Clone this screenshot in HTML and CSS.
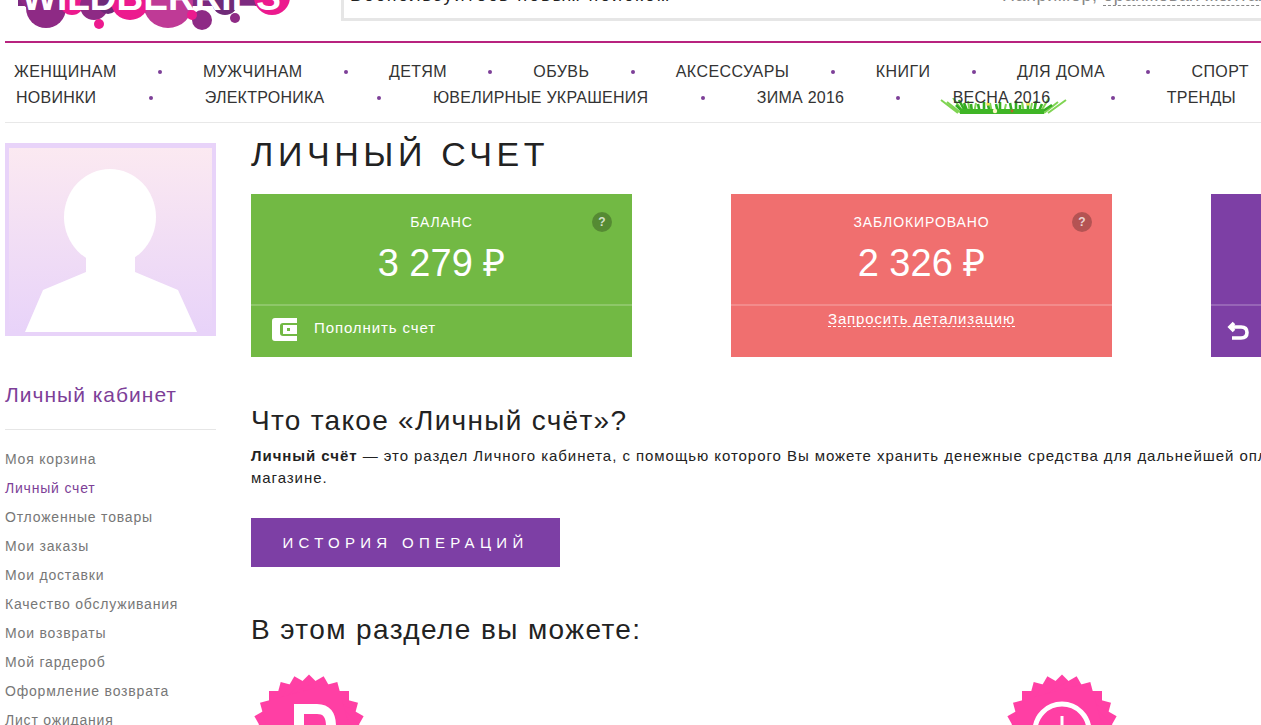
FILE: index.html
```html
<!DOCTYPE html>
<html lang="ru">
<head>
    <meta charset="UTF-8">
    <meta name="viewport" content="width=device-width, initial-scale=1.0">
    <title>Личный счет</title>
    <link rel="stylesheet" href="styles.css">
</head>
<body>
    <header class="top">
        <svg class="logo" width="300" height="34" viewBox="0 0 300 34">
            <rect x="18" y="-5" width="260" height="11" fill="#7d2a80"/>
            <circle cx="35" cy="-6" r="16" fill="#8e2a85"/>
            <circle cx="46" cy="8" r="20" fill="#8e2a85"/>
            <circle cx="72" cy="3" r="12" fill="#ec1a8e"/>
            <circle cx="94" cy="6" r="14" fill="#8e2a85"/>
            <circle cx="108" cy="4" r="10" fill="#6f2a78"/>
            <circle cx="99" cy="24" r="5" fill="#ec1a8e"/>
            <circle cx="168" cy="3" r="25" fill="#bf3a96"/>
            <circle cx="130" cy="1" r="19" fill="#ec1a8e"/>
            <circle cx="202" cy="20" r="10" fill="#8e2a85"/>
            <circle cx="192" cy="15" r="5" fill="#ec1a8e"/>
            <circle cx="225" cy="2" r="13" fill="#6f2a78"/>
            <circle cx="235" cy="18" r="5" fill="#8e2a85"/>
            <circle cx="272" cy="-3" r="18" fill="#ec1a8e"/>
            <text class="logo-text" x="22" y="10">WILDBERRIES</text>
        </svg>
        <div class="search">
            <span class="search-text">Воспользуйтесь новым поиском</span>
            <span class="search-hint">Например, <span class="dashed">оранжевая желтая</span></span>
        </div>
    </header>

    <nav class="menu">
        <div class="menu-row">
            <a>ЖЕНЩИНАМ</a><i></i><a>МУЖЧИНАМ</a><i></i><a>ДЕТЯМ</a><i></i><a>ОБУВЬ</a><i></i><a>АКСЕССУАРЫ</a><i></i><a>КНИГИ</a><i></i><a>ДЛЯ ДОМА</a><i></i><a>СПОРТ</a>
        </div>
        <div class="menu-row second">
            <a>НОВИНКИ</a><i></i><a>ЭЛЕКТРОНИКА</a><i></i><a>ЮВЕЛИРНЫЕ УКРАШЕНИЯ</a><i></i><a>ЗИМА 2016</a><i></i>
            <a class="spring">
                <svg class="grass" width="127" height="16" viewBox="0 0 127 16">
                    <path class="blades-light" d="M1 2 L18 15 M7 4 L21 15 M13 0 L24 15 M109 0 L100 15 M118 4 L104 15 M126 2 L108 15 M28 3 L30 15 M36 5 L34 15 M50 5 L52 15 M66 6 L64 15 M82 4 L84 15 M92 5 L90 15"/>
                    <path class="blades" d="M19 2 L26 15 M24 5 L28 15 M31 6 L32 15 M38 6 L40 15 M44 4 L44 15 M48 7 L50 15 M56 6 L58 15 M60 4 L60 15 M70 5 L72 15 M76 3 L76 15 M80 7 L80 15 M88 4 L88 15 M96 3 L94 15 M102 6 L98 15 M16 7 L24 15 M112 7 L100 15"/>
                    <rect x="20" y="11" width="84" height="5" fill="#3fb526"/>
                    <circle cx="48" cy="6" r="1.8" fill="#f2e24e"/>
                    <circle cx="88" cy="6" r="1.8" fill="#f2e24e"/>
                    <circle cx="55" cy="13" r="2.2" fill="#fff7c8"/>
                    <circle cx="72" cy="13" r="1.4" fill="#b5622a"/>
                </svg>
                <span class="spring-text">ВЕСНА 2016</span>
            </a><i></i><a>ТРЕНДЫ</a>
        </div>
    </nav>

    <div class="page">
        <aside class="side">
            <svg class="avatar" width="211" height="193" viewBox="0 0 211 193">
                <defs>
                    <linearGradient id="avatarBg" x1="0" y1="0" x2="0" y2="1">
                        <stop offset="0" stop-color="#fbe9f1"/>
                        <stop offset="1" stop-color="#e8d3f9"/>
                    </linearGradient>
                </defs>
                <rect width="211" height="193" fill="#e8d3f9"/>
                <rect x="4" y="5" width="203" height="184" fill="url(#avatarBg)"/>
                <ellipse cx="105" cy="74" rx="46" ry="48" fill="#fff"/>
                <path d="M81 105 H130 V129 L173 147 L192 189 H20 L38 147 L81 129 Z" fill="#fff"/>
            </svg>
            <h3 class="side-title">Личный кабинет</h3>
            <ul class="side-menu">
                <li>Моя корзина</li>
                <li class="active">Личный счет</li>
                <li>Отложенные товары</li>
                <li>Мои заказы</li>
                <li>Мои доставки</li>
                <li>Качество обслуживания</li>
                <li>Мои возвраты</li>
                <li>Мой гардероб</li>
                <li>Оформление возврата</li>
                <li>Лист ожидания</li>
            </ul>
        </aside>

        <main class="content">
            <h1>ЛИЧНЫЙ СЧЕТ</h1>
            <div class="cards">
                <section class="card green">
                    <div class="card-top">
                        <span class="help">?</span>
                        <div class="card-label">БАЛАНС</div>
                        <div class="card-sum">3 279 ₽</div>
                    </div>
                    <div class="card-bottom">
                        <svg width="25" height="23" viewBox="0 0 25 23">
                            <path d="M3 0 H25 V5 H11 Q8 5 8 8 V15 Q8 18 11 18 H25 V23 H3 Q0 23 0 20 V3 Q0 0 3 0 Z" fill="#fff"/>
                            <path d="M11 7 H25 V16 H11 Z" fill="#fff"/>
                            <rect x="15" y="10" width="3" height="3" fill="#72b944"/>
                        </svg>
                        <span class="card-action">Пополнить счет</span>
                    </div>
                </section>
                <section class="card red">
                    <div class="card-top">
                        <span class="help">?</span>
                        <div class="card-label">ЗАБЛОКИРОВАНО</div>
                        <div class="card-sum">2 326 ₽</div>
                    </div>
                    <div class="card-bottom center">
                        <span class="card-link">Запросить детализацию</span>
                    </div>
                </section>
                <section class="card purple">
                    <div class="card-top"></div>
                    <div class="card-bottom">
                        <svg width="23" height="20" viewBox="0 0 23 20">
                            <path d="M7 2 L3 6 L7 10 M3 6 H14 Q20 6 20 11.5 Q20 17 14 17 H5" fill="none" stroke="#fff" stroke-width="3.6"/>
                        </svg>
                    </div>
                </section>
            </div>

            <h2 class="what">Что такое «Личный счёт»?</h2>
            <p class="about"><b>Личный счёт</b> — это раздел Личного кабинета, с помощью которого Вы можете хранить денежные средства для дальнейшей оплаты покупок в нашем магазине.</p>
            <a class="history">ИСТОРИЯ ОПЕРАЦИЙ</a>

            <h2 class="can">В этом разделе вы можете:</h2>
            <div class="features">
                <svg class="badge" width="114" height="114" viewBox="-57 -57 114 114">
                    <g fill="#ff3fa4">
                        <rect x="-40" y="-40" width="80" height="80"/>
                        <rect x="-40" y="-40" width="80" height="80" transform="rotate(15)"/>
                        <rect x="-40" y="-40" width="80" height="80" transform="rotate(30)"/>
                        <rect x="-40" y="-40" width="80" height="80" transform="rotate(45)"/>
                        <rect x="-40" y="-40" width="80" height="80" transform="rotate(60)"/>
                        <rect x="-40" y="-40" width="80" height="80" transform="rotate(75)"/>
                    </g>
                    <path d="M-10 30 V-22 H8 Q22 -22 22 -5 Q22 12 8 12 H-10" fill="none" stroke="#fff" stroke-width="10"/>
                </svg>
                <svg class="badge" width="114" height="114" viewBox="-57 -57 114 114">
                    <g fill="#ff3fa4">
                        <rect x="-40" y="-40" width="80" height="80"/>
                        <rect x="-40" y="-40" width="80" height="80" transform="rotate(15)"/>
                        <rect x="-40" y="-40" width="80" height="80" transform="rotate(30)"/>
                        <rect x="-40" y="-40" width="80" height="80" transform="rotate(45)"/>
                        <rect x="-40" y="-40" width="80" height="80" transform="rotate(60)"/>
                        <rect x="-40" y="-40" width="80" height="80" transform="rotate(75)"/>
                    </g>
                    <circle r="27" fill="none" stroke="#fff" stroke-width="5"/>
                    <path d="M0 -15 V15 M-15 0 H15" stroke="#fff" stroke-width="3"/>
                </svg>
            </div>
        </main>
    </div>
</body>
</html>
```

FILE: styles.css
```css
/* General */
html, body {
    height: 725px;
    overflow: hidden;
}

body {
    font-family: 'Liberation Sans', Arial, sans-serif;
    background-color: #fff;
    color: #222;
    margin: 0;
}

h1, h2, h3, p, ul {
    margin: 0;
    padding: 0;
    font-weight: normal;
}

/* Header */
.top {
    display: flex;
    height: 41px;
    margin-left: 5px;
    border-bottom: 2px solid #b8237f;
    overflow: hidden;
}

.logo {
    flex: none;
    display: block;
    margin-left: -5px;
    overflow: hidden;
}

.logo-text {
    font-family: 'Liberation Sans', Arial, sans-serif;
    font-size: 37px;
    font-weight: bold;
    fill: #fff;
}

.search {
    flex: none;
    box-sizing: border-box;
    display: flex;
    align-items: flex-end;
    width: 960px;
    height: 21px;
    margin-left: 41px;
    padding: 0 0 14px 6px;
    border: 3px solid #e6e6e6;
    border-top: none;
    font-size: 18px;
    line-height: 18px;
    white-space: nowrap;
}

.search-text {
    flex: none;
    width: 652px;
    letter-spacing: 1.9px;
}

.search-hint {
    flex: none;
    color: #888;
    letter-spacing: 0.6px;
}

.dashed {
    border-bottom: 1px dashed #888;
}

/* Menu */
.menu {
    margin-left: 5px;
    padding: 16px 0 11px;
    border-bottom: 1px solid #e8e8e8;
    font-size: 16px;
    line-height: 26px;
    letter-spacing: 0.45px;
    color: #333;
}

.menu-row {
    display: flex;
    justify-content: space-between;
    align-items: center;
    padding: 0 12px 0 9px;
}

.menu-row.second {
    padding: 0 25px 0 11px;
    letter-spacing: 0.25px;
}

.menu-row i {
    width: 4px;
    height: 4px;
    border-radius: 50%;
    background-color: #7d3f98;
}

.spring {
    position: relative;
    margin-right: 8px;
}

.spring-text {
    position: relative;
}

.grass {
    position: absolute;
    left: -13px;
    top: 13px;
}

.blades {
    fill: none;
    stroke: #35ad22;
    stroke-width: 2.6;
}

.blades-light {
    fill: none;
    stroke: #7fd452;
    stroke-width: 2;
}

/* Sidebar */
.page {
    display: flex;
    padding: 20px 0 0 5px;
}

.side {
    flex: none;
    width: 211px;
    margin-right: 35px;
}

.avatar {
    display: block;
}

.side-title {
    margin-top: 47px;
    padding-bottom: 22px;
    border-bottom: 1px solid #e6e6e6;
    font-size: 21px;
    line-height: 24px;
    letter-spacing: 1px;
    color: #7d3f98;
}

.side-menu {
    margin-top: 15px;
    list-style: none;
    font-size: 14px;
    line-height: 29px;
    letter-spacing: 0.8px;
    color: #777;
}

.side-menu .active {
    color: #7d3f98;
}

/* Content */
.content {
    flex: none;
    width: 1260px;
}

h1 {
    font-size: 34px;
    line-height: 40px;
    letter-spacing: 4.6px;
    margin-top: -9px;
}

.cards {
    display: flex;
    gap: 99px;
    margin-top: 20px;
}

.card {
    flex: none;
    width: 381px;
    height: 163px;
    display: flex;
    flex-direction: column;
    color: #fff;
}

.green { background-color: #72b944; }
.red { background-color: #f06f6f; }
.purple { background-color: #7d3fa5; width: 100px; }

.card-top {
    position: relative;
    height: 110px;
    text-align: center;
    border-bottom: 2px solid rgba(255, 255, 255, 0.2);
}

.card-label {
    padding-top: 19px;
    font-size: 14px;
    line-height: 18px;
    letter-spacing: 0.9px;
}

.card-sum {
    margin-top: 11px;
    font-size: 38px;
    line-height: 42px;
}

.help {
    position: absolute;
    top: 18px;
    right: 20px;
    width: 20px;
    height: 20px;
    border-radius: 50%;
    background-color: rgba(0, 0, 0, 0.25);
    color: rgba(255, 255, 255, 0.75);
    font-size: 12px;
    font-weight: bold;
    line-height: 20px;
}

.card-bottom {
    display: flex;
    align-items: center;
    gap: 17px;
    padding: 12px 0 0 21px;
}

.card-bottom.center {
    justify-content: center;
    padding: 5px 0 0;
}

.purple .card-bottom {
    padding: 15px 0 0 16px;
}

.card-action {
    font-size: 15px;
    letter-spacing: 0.9px;
    margin-top: -5px;
}

.card-link {
    font-size: 15px;
    line-height: 15px;
    letter-spacing: 0.85px;
    border-bottom: 1px dashed #fff;
}

.what {
    margin-top: 47px;
    font-size: 28px;
    line-height: 34px;
    letter-spacing: 1.3px;
}

.about {
    margin-top: 7px;
    font-size: 15px;
    line-height: 22px;
    letter-spacing: 0.95px;
    width: 1250px;
}

.history {
    display: block;
    width: 309px;
    height: 49px;
    margin-top: 29px;
    background-color: #7d3fa5;
    color: #fff;
    font-size: 15px;
    line-height: 49px;
    letter-spacing: 5.3px;
    text-align: center;
}

.can {
    margin-top: 45px;
    font-size: 28px;
    line-height: 36px;
    letter-spacing: 1.4px;
}

.features {
    display: flex;
    gap: 639px;
    margin: 26px 0 0 1px;
}
```
